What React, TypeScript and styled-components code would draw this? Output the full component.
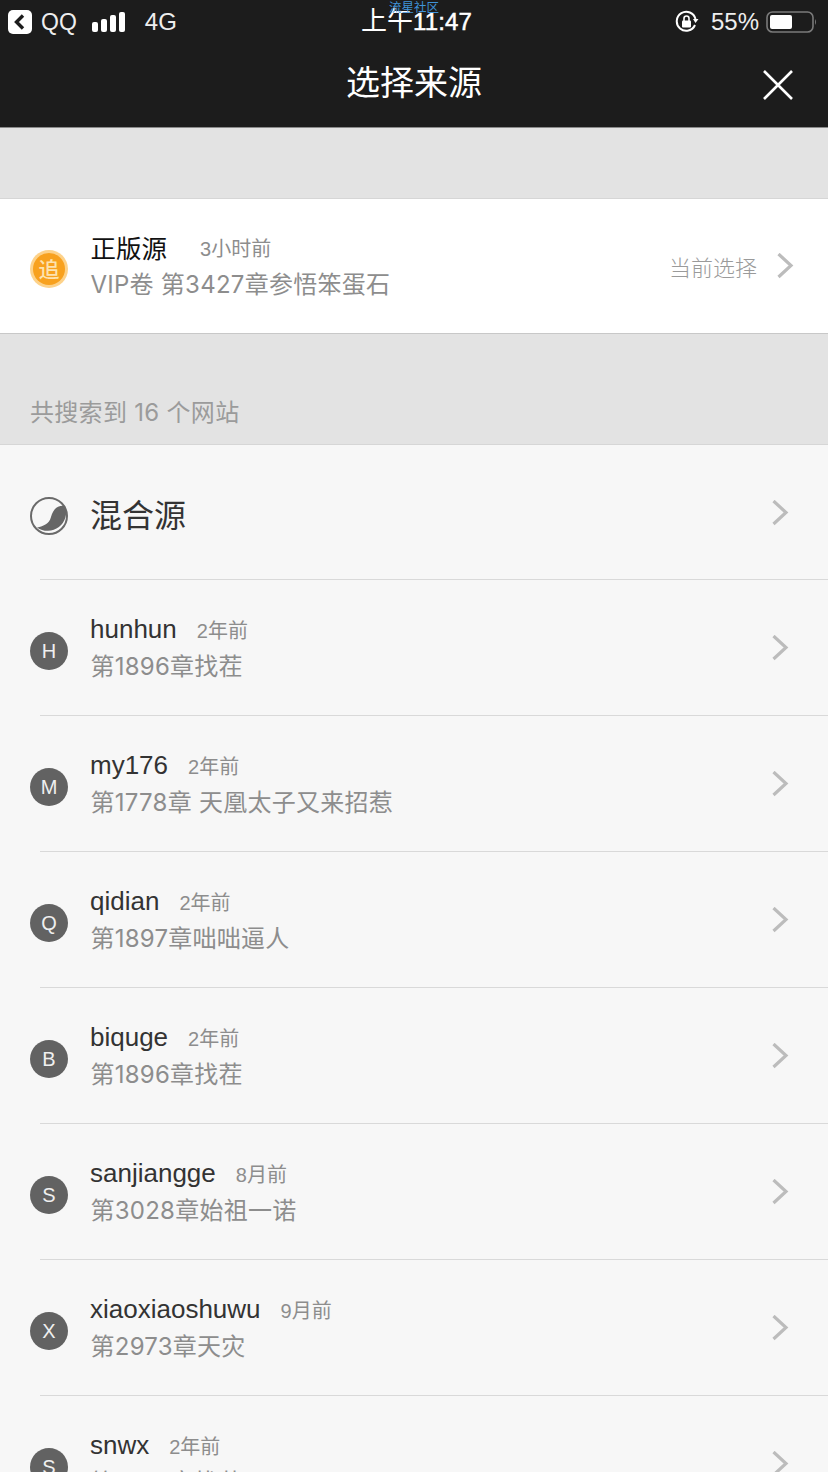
import React from "react";
import styled, { createGlobalStyle } from "styled-components";

const Global = createGlobalStyle`
  html, body { margin: 0; padding: 0; background: #f7f7f7; }
  body { font-family: "Liberation Sans", "Noto Sans CJK SC", sans-serif; overflow: hidden; }
  * { box-sizing: border-box; }
`;
const Page = styled.div`
  width: 828px; height: 1472px; overflow: hidden; position: relative; background: #f7f7f7;
`;
const Header = styled.header`
  height: 128px; background: #1c1c1c; border-bottom: 1px solid #8a8a8a; color: #fff;
  display: flex; flex-direction: column;
`;
const StatusBar = styled.div`
  height: 42px; display: grid; grid-template-columns: 1fr auto 1fr; align-items: center;
  padding: 0 11px 0 8px; font-size: 24px; color: #eee;
`;
const StatusSide = styled.div<{ $end?: boolean }>`
  display: flex; align-items: center; justify-content: ${p => (p.$end ? "flex-end" : "flex-start")};
`;
const StatusText = styled.span<{ $ml?: number; $size?: number }>`
  margin-left: ${p => p.$ml ?? 0}px; line-height: 42px; font-size: ${p => p.$size ?? 24}px;
`;
const Clock = styled.span`
  font-size: 26px; line-height: 42px; color: #fff; margin-left: 8px;
`;
const ClockDigits = styled.span`
  font-size: 24px; -webkit-text-stroke: 0.5px #fff; letter-spacing: 0.1px;
`;
const Watermark = styled.span`
  position: absolute; left: 389px; top: 0; font-size: 12.5px; line-height: 13px; color: #3f93d8;
  font-family: "Noto Sans CJK SC", sans-serif;
`;
const TitleBar = styled.div`
  flex: 1; display: flex; align-items: center; justify-content: center; position: relative; padding-bottom: 8px;
`;
const Title = styled.h1`
  margin: 0; font-size: 34px; line-height: 46px; font-weight: 400;
  font-family: "Noto Sans CJK SC", sans-serif;
`;
const CloseButton = styled.span`
  position: absolute; left: 762px; top: 27px; width: 32px; height: 32px; display: block;
`;
const Gap = styled.div`
  height: 71px; background: #e3e3e3; border-bottom: 1px solid #d6d6d6;
`;
const Current = styled.section`
  height: 135px; background: #fff; border-bottom: 1px solid #c8c8c8;
  display: flex; align-items: center; padding: 0 33px 0 30px;
`;
const Icon = styled.span`
  width: 38px; height: 38px; flex: none; display: block; margin-right: 22px; position: relative; top: 3px;
`;
const Letter = styled.span`
  width: 38px; height: 38px; border-radius: 50%; flex: none; margin-right: 22px; position: relative; top: 3px;
  background: #626262; color: #efefef; font-size: 20px; display: flex; align-items: center; justify-content: center;
`;
const Body = styled.div`
  flex: 1; min-width: 0; display: flex; flex-direction: column;
`;
const NameLine = styled.div`
  display: flex; align-items: baseline; height: 38px;
`;
const Name = styled.span<{ $strong?: boolean }>`
  font-size: 26px; line-height: 36px; color: ${p => (p.$strong ? "#111" : "#333")}; margin-right: 20px;
`;
const BrandLine = styled(NameLine)`
  align-items: center;
`;
const BrandName = styled(Name)`
  margin-left: 0.5px; margin-right: 33px; font-family: "Noto Sans CJK SC", sans-serif; font-size: 25.5px; position: relative; top: -1px;
`;
const Time = styled.span`
  font-size: 20px; line-height: 36px; color: #8d8d8d;
`;
const BrandTime = styled(Time)`
  position: relative; top: 1px;
`;
const Sub = styled.div`
  font-family: Inter, "Noto Sans CJK SC", sans-serif;
  font-size: 24px; line-height: 36px; color: #8d8d8d; white-space: nowrap; letter-spacing: 0.25px; margin-left: 0.5px;
`;
const Selected = styled.span`
  font-size: 22px; color: #9a9a9a; margin-right: 20px; font-family: "Noto Sans CJK SC", sans-serif; font-weight: 300;
`;
const Count = styled.div`
  height: 111px; background: #e3e3e3; border-bottom: 1px solid #d6d6d6;
  display: flex; align-items: flex-end; padding: 0 30px 15px; font-size: 24px; line-height: 32px; color: #9b9b9b;
  font-family: Inter, "Noto Sans CJK SC", sans-serif; letter-spacing: 0.3px;
`;
const List = styled.div`
  display: flex; flex-direction: column;
`;
const Row = styled.div<{ $h?: number }>`
  height: ${p => p.$h ?? 135}px; display: flex; align-items: center; position: relative; padding: 0 38px 0 30px;
  &::after { content: ""; position: absolute; left: 40px; right: 0; bottom: 0; height: 1px; background: #d9d9d9; }
`;
const LastRow = styled(Row)`
  &::after { display: none; }
`;
const MixedName = styled.span`
  font-size: 32px; line-height: 44px; color: #333; font-family: "Noto Sans CJK SC", sans-serif;
`;

const Chevron = ({ color = "#bcbcbc" }: { color?: string }) => (
  <svg width="18" height="26" viewBox="0 0 18 26" fill="none">
    <path d="M1.5 1 L14 12.5 L1.5 24" stroke={color} strokeWidth="3.2" />
  </svg>
);

const rows = [
  { l: "H", n: "hunhun", t: "2年前", s: "第1896章找茬" },
  { l: "M", n: "my176", t: "2年前", s: "第1778章 天凰太子又来招惹" },
  { l: "Q", n: "qidian", t: "2年前", s: "第1897章咄咄逼人" },
  { l: "B", n: "biquge", t: "2年前", s: "第1896章找茬" },
  { l: "S", n: "sanjiangge", t: "8月前", s: "第3028章始祖一诺" },
  { l: "X", n: "xiaoxiaoshuwu", t: "9月前", s: "第2973章天灾" },
];

export default function App() {
  return (
    <Page>
      <Global />
      <Header>
        <StatusBar>
          <StatusSide>
            <svg width="24" height="24" viewBox="0 0 24 24">
              <rect width="24" height="24" rx="5" fill="#fff" />
              <path d="M15 5.5 L8.5 12 L15 18.5" stroke="#1c1c1c" strokeWidth="3.4" fill="none" />
            </svg>
            <StatusText $ml={9} $size={23}>QQ</StatusText>
            <svg width="33" height="20" viewBox="0 0 33 20" style={{ marginLeft: 15 }} fill="#fff">
              <rect x="0" y="10" width="6" height="10" rx="2" />
              <rect x="9" y="7" width="6" height="13" rx="2" />
              <rect x="18" y="3" width="6" height="17" rx="2" />
              <rect x="27" y="0" width="6" height="20" rx="2" />
            </svg>
            <StatusText $ml={20}>4G</StatusText>
          </StatusSide>
          <Clock>上午<ClockDigits>11:47</ClockDigits></Clock>
          <StatusSide $end>
            <svg width="24" height="24" viewBox="0 0 24 24" fill="none">
              <path d="M20 15 A9.5 9.5 0 1 1 20.5 9" stroke="#fff" strokeWidth="2" />
              <path d="M18 9 L23.5 9 L20.5 13 Z" fill="#fff" />
              <rect x="7" y="10.5" width="9" height="7" rx="1" fill="#fff" />
              <path d="M9 11 V8.5 a2.5 2.5 0 0 1 5 0 V11" stroke="#fff" strokeWidth="1.6" />
            </svg>
            <StatusText $ml={12}>55%</StatusText>
            <svg width="51" height="24" viewBox="0 0 51 24" style={{ marginLeft: 7 }} fill="none">
              <rect x="1" y="2" width="46" height="20" rx="5.5" stroke="#7a7a7a" strokeWidth="1.6" />
              <rect x="4" y="5" width="22" height="14" rx="2" fill="#fff" />
              <path d="M49 9 q2 3 0 6 z" fill="#7a7a7a" />
            </svg>
          </StatusSide>
        </StatusBar>
        <TitleBar>
          <Title>选择来源</Title>
          <CloseButton>
            <svg width="32" height="32" viewBox="0 0 32 32">
              <path d="M2 2 L30 30 M30 2 L2 30" stroke="#fff" strokeWidth="2.6" />
            </svg>
          </CloseButton>
        </TitleBar>
      </Header>
      <Watermark>流星社区</Watermark>
      <Gap />
      <Current>
        <Icon>
          <svg width="38" height="38" viewBox="0 0 38 38">
            <circle cx="19" cy="19" r="19" fill="#fdd28a" />
            <circle cx="19" cy="19" r="16" fill="#f8a11e" />
            <text x="19" y="26.5" textAnchor="middle" fontSize="21" fontWeight="500" fill="#fde3b0" fontFamily="Noto Sans CJK SC">追</text>
          </svg>
        </Icon>
        <Body>
          <BrandLine>
            <BrandName $strong>正版源</BrandName>
            <BrandTime>3小时前</BrandTime>
          </BrandLine>
          <Sub>VIP卷 第3427章参悟笨蛋石</Sub>
        </Body>
        <Selected>当前选择</Selected>
        <Chevron />
      </Current>
      <Count>共搜索到 16 个网站</Count>
      <List>
        <Row>
          <Icon>
            <svg width="38" height="38" viewBox="0 0 38 38">
              <circle cx="19" cy="19" r="18" fill="#f7f7f7" stroke="#6a6a6a" strokeWidth="2" />
              <path d="M7 30.5 C14 29 19 27 21 20 C23 12 28 8 35 9 A18.5 18.5 0 0 1 7 30.5 Z" fill="#666" />
            </svg>
          </Icon>
          <Body><MixedName>混合源</MixedName></Body>
          <Chevron />
        </Row>
        {rows.map(r => (
          <Row key={r.n} $h={136}>
            <Letter>{r.l}</Letter>
            <Body>
              <NameLine><Name>{r.n}</Name><Time>{r.t}</Time></NameLine>
              <Sub>{r.s}</Sub>
            </Body>
            <Chevron />
          </Row>
        ))}
        <LastRow $h={136}>
          <Letter>S</Letter>
          <Body>
            <NameLine><Name>snwx</Name><Time>2年前</Time></NameLine>
            <Sub>第1896章找茬</Sub>
          </Body>
          <Chevron />
        </LastRow>
      </List>
    </Page>
  );
}
